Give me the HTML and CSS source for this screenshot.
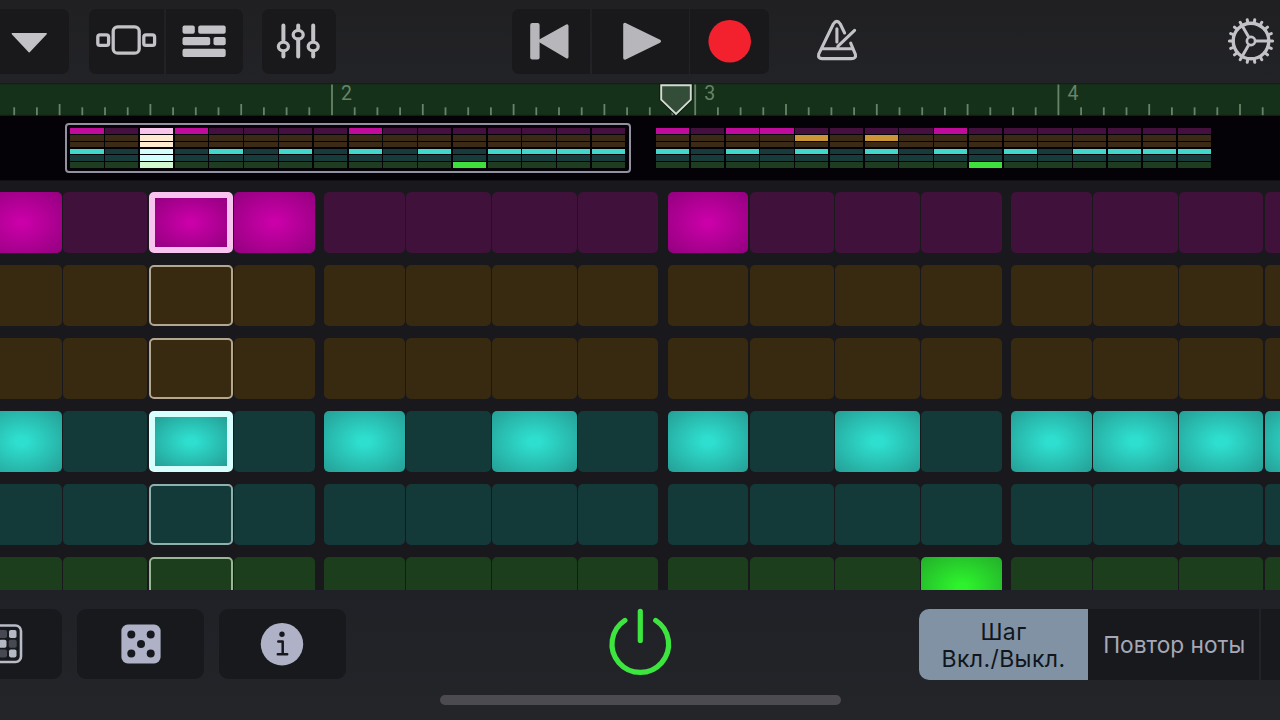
FILE: index.html
```html
<!DOCTYPE html>
<html lang="ru">
<head>
<meta charset="utf-8">
<title>Beat Sequencer</title>
<link rel="stylesheet" href="styles.css">
</head>
<body>
<div class="app">
  <header class="toolbar">
    <button class="btn nav-btn"><svg width="70" height="65" viewBox="0 0 70 65"><path d="M12.3 24.7H46.2L29.2 42.7Z" fill="#c3c2c6" stroke="#c3c2c6" stroke-width="1.4" stroke-linejoin="round"/></svg></button>
    <div class="group view-group">
      <button class="btn"><svg width="75" height="65" viewBox="89 9 75 65" fill="none" stroke="#c3c2c6" stroke-width="3.3"><rect x="113.2" y="26.8" width="26" height="26.4" rx="4.5"/><rect x="97.8" y="34.8" width="10.8" height="10.6" rx="2.2"/><rect x="143.8" y="34.8" width="10.8" height="10.6" rx="2.2"/></svg></button>
      <button class="btn"><svg width="77" height="65" viewBox="166 9 77 65" fill="#c3c2c6"><rect x="182.5" y="25.5" width="12.3" height="8.3" rx="2"/><rect x="198.2" y="25.5" width="27.5" height="8.3" rx="2"/><rect x="182.5" y="37" width="27.7" height="8.3" rx="2"/><rect x="213.5" y="37" width="12.2" height="8.3" rx="2"/><rect x="182.5" y="48.8" width="43.2" height="8.3" rx="2"/></svg></button>
    </div>
    <button class="btn mixer-btn"><svg width="74" height="65" viewBox="262 9 74 65" fill="none" stroke="#c3c2c6" stroke-width="4" stroke-linecap="round"><path d="M283.4 25.5V40M283.4 53V56.5M298.2 25.5V29M298.2 40V56.5M313.2 25.5V40M313.2 53V56.5"/><g stroke-width="3.3"><ellipse cx="283.4" cy="46.5" rx="5" ry="4.3"/><ellipse cx="298.2" cy="34.7" rx="5" ry="4.3"/><ellipse cx="313.2" cy="46.5" rx="5" ry="4.3"/></g></svg></button>
    <div class="group transport">
      <button class="btn"><svg width="78" height="65" viewBox="512 9 78 65" fill="#b7b6ba"><rect x="530.2" y="23" width="9.4" height="36.5" rx="2"/><path d="M540 40.9L567 25.9V56.9Z" stroke="#b7b6ba" stroke-width="3" stroke-linejoin="round"/></svg></button>
      <button class="btn"><svg width="97" height="65" viewBox="592 9 97 65"><path d="M624.9 24.5V58L659.3 41.3Z" fill="#b7b6ba" stroke="#b7b6ba" stroke-width="3.4" stroke-linejoin="round"/></svg></button>
      <button class="btn"><svg width="79" height="65" viewBox="690 9 79 65"><circle cx="729.7" cy="41.3" r="21.3" fill="#f3202e"/></svg></button>
    </div>
    <svg class="metronome" width="50" height="50" viewBox="812 16 50 50" fill="none" stroke="#c3c2c6" stroke-width="3.1" stroke-linecap="round" stroke-linejoin="round"><path d="M844.6 33L840.3 24Q836.8 18.8 833.3 24L818.7 54.2Q817.8 58.6 822 58.6H851.5Q856.3 58.6 855.4 54.3L850.7 43.2M821.5 48.8H852.5M836.9 28.8V42M837.8 46.3L854.6 30.3"/></svg>
    <svg class="gear" width="48" height="48" viewBox="-24 -24 48 48" fill="none" stroke="#c3c2c6"><circle r="17.8" stroke-width="3.4"/><circle r="4.1" stroke-width="2.7"/><path id="spokes" stroke-width="3" d="M5 0H17M-2.5 -4.3L-8.5 -14.7M-2.5 4.3L-8.5 14.7"/><path id="teeth" stroke-width="3" stroke-linecap="round"/></svg>
  </header>

  <svg class="ruler" width="1280" height="33" viewBox="0 83 1280 33">
    <g id="ticks" fill="#668467"></g>
    <g class="bar-number"><text x="341" y="100">2</text><text x="704.2" y="100">3</text><text x="1067.4" y="100">4</text></g>
    <path d="M661.2 85.3H690.8V99.6L676 114L661.2 99.6Z" fill="#344d39" stroke="#0a180b" stroke-width="3.6"/>
    <path d="M661.2 85.3H690.8V99.6L676 114L661.2 99.6Z" fill="#344d39" stroke="#d3dbd2" stroke-width="1.9"/>
  </svg>

  <section class="overview">
    <div class="mini-frame"><div class="mini" id="mini-a"></div></div>
    <div class="mini mini-next" id="mini-b"></div>
  </section>

  <main class="sequencer" id="sequencer"></main>

  <footer class="footer">
    <button class="btn foot-btn pattern-btn"><svg width="62" height="70" viewBox="0 609 62 70"><rect x="-17" y="625.5" width="38" height="36.5" rx="5.5" fill="#17181c" stroke="#b9bcc7" stroke-width="2.6"/><g fill="#b4b8c4"><rect x="9" y="630" width="7.5" height="8" rx="1.8"/><rect x="-1" y="639.8" width="7.5" height="8" rx="1.8"/><rect x="9" y="649.4" width="7.5" height="8" rx="1.8"/></g><g fill="#464951"><rect x="-1" y="630" width="8" height="8" rx="1.8"/><rect x="8.7" y="639.8" width="8" height="8" rx="1.8"/><rect x="-1" y="649.4" width="8" height="8" rx="1.8"/></g></svg></button>
    <button class="btn foot-btn dice-btn"><svg width="40" height="40" viewBox="0 0 40 40"><rect x=".4" y=".5" width="39.2" height="39" rx="6.5" fill="#afb2c7"/><g fill="#17181e"><circle cx="10.3" cy="10.4" r="4"/><circle cx="29.7" cy="10.4" r="4"/><circle cx="20" cy="20" r="4"/><circle cx="10.3" cy="29.6" r="4"/><circle cx="29.7" cy="29.6" r="4"/></g></svg></button>
    <button class="btn foot-btn info-btn"><svg width="44" height="44" viewBox="0 0 44 44"><circle cx="22" cy="22.2" r="21.2" fill="#afb2c7"/><circle cx="22" cy="12.2" r="2.7" fill="#17181e"/><path d="M18.3 19.6H22.7V32M17.8 32.2H27.2" fill="none" stroke="#17181e" stroke-width="2.5" stroke-linecap="round" stroke-linejoin="round"/></svg></button>
    <svg class="power" width="66" height="70" viewBox="607 606 66 70" fill="none" stroke="#3de53f" stroke-width="5.2" stroke-linecap="round"><path d="M640.3 611.3V640.5M624.9 620.4A28.3 28.3 0 1 0 655.7 620.4"/></svg>
    <div class="segments">
      <button class="seg seg-on"><span>Шаг</span><span>Вкл./Выкл.</span></button>
      <button class="seg seg-repeat"><span>Повтор ноты</span></button>
      <button class="seg seg-more"></button>
    </div>
    <div class="home-bar"></div>
  </footer>
</div>
<script src="app.js"></script>
</body>
</html>
```
FILE: styles.css
```css
* { box-sizing: border-box; }
body { margin: 0; background: #212226; overflow: hidden; }
button { border: 0; padding: 0; margin: 0; font: inherit; }
svg { display: block; flex: none; }

.app {
  width: 1280px; height: 720px; overflow: hidden;
  display: flex; flex-direction: column;
  font-family: Inter, "Noto Sans", sans-serif;
}

/* Toolbar */
.toolbar {
  flex: none; height: 83px; padding-top: 9px;
  display: flex; align-items: flex-start;
  background: linear-gradient(#202022, #222327);
}
.btn {
  background: #19191b; height: 65px; flex: none;
  display: flex; align-items: center; justify-content: center;
}
.group { display: flex; gap: 1.5px; flex: none; border-radius: 7px; overflow: hidden; }
.nav-btn { width: 69px; border-radius: 0 7px 7px 0; overflow: hidden; justify-content: flex-start; }
.view-group { margin-left: 20px; width: 153.5px; }
.mixer-btn { margin-left: 19.5px; width: 74px; border-radius: 7px; }
.transport { margin-left: 176px; width: 257px; }
.metronome { margin: 7px 0 0 43px; }
.gear { margin: 8px 0 0 365px; }

/* Ruler */
.ruler { background: linear-gradient(#0f1c10 0, #16311a 2px, #16311a 31px, #0d190e 33px); }
.bar-number { font: 19.5px Roboto, sans-serif; fill: #668467; }

/* Pattern overview */
.overview {
  flex: none; height: 65px; padding: 7px 0 0 65px;
  display: flex; align-items: flex-start;
  background: #040206; border-bottom: 1px solid #111014;
}
.mini-frame {
  width: 565.7px; height: 50px; padding: 3px 0 0 3.4px;
  border: 2px solid #92919f; border-radius: 4px;
}
.mini {
  width: 554.8px; height: 40px;
  display: grid; grid-template: repeat(6, 1fr) / repeat(16, 1fr);
  gap: 1.2px 1.5px;
}
.mini-next { margin: 5px 0 0 25.3px; }
.m.magenta { background: #44103e; } .m.magenta.on { background: #c00b9c; } .m.magenta.now { background: #f8c4ec; }
.m.brown { background: #3b2a15; } .m.brown.on { background: #cb9637; } .m.brown.now { background: #feead0; }
.m.teal { background: #163b3a; } .m.teal.on { background: #40d8ca; } .m.teal.now { background: #d2fffb; }
.m.green { background: #1e3d20; } .m.green.on { background: #3fdf3c; } .m.green.now { background: #d2f9cd; }

/* Step sequencer */
.sequencer {
  flex: none; height: 409px; padding-top: 11px; overflow: hidden;
  display: flex; flex-direction: column; gap: 12px;
  background: #19181d;
}
.row { flex: none; height: 61px; display: flex; gap: 9.2px; margin-left: -19.1px; }
.beat {
  flex: none; width: 334.2px; display: grid;
  grid-template-columns: 80.9fr 84.5fr 84.5fr 80.7fr; gap: 1.3px;
}
.step { border-radius: 5px; }
.magenta .step { background: #40113a; }
.brown .step { background: #382a11; }
.teal .step { background: #133a39; }
.green .step { background: #1d3e1c; }
.magenta .step.on { background: radial-gradient(ellipse farthest-corner, #cb00a9 5%, #93007f 100%); }
.teal .step.on { background: radial-gradient(ellipse farthest-corner, #2edfcf 10%, #259e95 100%); }
.green .step.on { background: radial-gradient(ellipse farthest-corner, #2df22c 10%, #23ae2a 100%); }
.step.now { border: 2px solid; }
.magenta .step.now { border: 6px solid #f8c3ee; }
.teal .step.now.on { border: 6px solid #d7fffd; }
.step.now.on { background-origin: padding-box; }
.brown .step.now { border-color: #b3a78f; }
.teal .step.now { border-color: #8fb1ae; }
.green .step.now { border-color: #99b695; }

/* Footer */
.footer {
  flex: none; height: 130px; padding-top: 19px; position: relative;
  display: flex; align-items: flex-start;
  background: linear-gradient(#202126, #242529);
}
.foot-btn { height: 70px; border-radius: 9px; background: #18191d; }
.pattern-btn { width: 62px; border-radius: 0 9px 9px 0; overflow: hidden; }
.dice-btn { margin-left: 15px; width: 126.5px; padding-left: 1px; }
.info-btn { margin-left: 15.5px; width: 126.5px; }
.power { margin: -3px 0 0 261.5px; }
.segments { margin-left: 246px; width: 361px; display: flex; border-radius: 10px 0 0 10px; overflow: hidden; }
.seg {
  flex: none; height: 71px; background: #18191d; color: #a6a8b6;
  display: flex; flex-direction: column; align-items: center; justify-content: center;
  font-size: 23px; line-height: 27px; white-space: nowrap;
}
.seg-on { width: 169px; background: #8092a3; color: #10161d; padding-top: 2px; letter-spacing: .4px; }
.seg-repeat { width: 171px; font-size: 22.7px; padding: 0 0 1px 1.5px; }
.seg-more { width: 20px; margin-left: 1.5px; }
.home-bar {
  position: absolute; left: 440px; bottom: 15px;
  width: 401px; height: 10px; border-radius: 5px; background: #4c4c50;
}
```
FILE: app.js
```js
const rows = ['magenta', 'brown', 'brown', 'teal', 'teal', 'green'];

// Active steps of each row, by pattern
const patternA = [[0, 3, 8], [], [], [0, 4, 6, 8, 10, 12, 13, 14, 15], [], [11]];
const patternB = [[0, 2, 3, 8], [4, 6], [], [0, 2, 4, 6, 8, 10, 12, 13, 14, 15], [], [9]];
const visible = [[0, 2, 3, 8], [], [], [0, 2, 4, 6, 8, 10, 12, 13, 14, 15], [], [11]];
const playhead = 2;

function drawMini(id, pattern, current) {
  const el = document.getElementById(id);
  rows.forEach((color, r) => {
    for (let c = 0; c < 16; c++) {
      const cell = document.createElement('i');
      cell.className = 'm ' + color + (pattern[r].includes(c) ? ' on' : '') + (c === current ? ' now' : '');
      el.append(cell);
    }
  });
}
drawMini('mini-a', patternA, playhead);
drawMini('mini-b', patternB, -1);

const seq = document.getElementById('sequencer');
rows.forEach((color, r) => {
  const row = document.createElement('div');
  row.className = 'row ' + color;
  for (let b = 0; b < 4; b++) {
    const beat = document.createElement('div');
    beat.className = 'beat';
    for (let s = 0; s < 4; s++) {
      const i = b * 4 + s;
      const step = document.createElement('div');
      step.className = 'step' + (visible[r].includes(i) ? ' on' : '') + (i === playhead ? ' now' : '');
      beat.append(step);
    }
    row.append(beat);
  }
  seq.append(row);
});

// Ruler ticks: sixteen per bar, longer on each beat
let ticks = '';
for (let i = -14; i <= 41; i++) {
  const x = 332 + i * 22.7;
  const top = i % 16 === 0 ? 84.5 : i % 4 === 0 ? 104 : 107.3;
  ticks += `<rect x="${(x - 0.9).toFixed(1)}" y="${top}" width="1.8" height="${(115.2 - top).toFixed(1)}"/>`;
}
document.getElementById('ticks').innerHTML = ticks;

// Gear teeth
let teeth = '';
for (let i = 0; i < 18; i++) {
  const a = (i * 20) * Math.PI / 180;
  teeth += `M${(18 * Math.cos(a)).toFixed(2)} ${(18 * Math.sin(a)).toFixed(2)}L${(21.6 * Math.cos(a)).toFixed(2)} ${(21.6 * Math.sin(a)).toFixed(2)}`;
}
document.getElementById('teeth').setAttribute('d', teeth);
```
